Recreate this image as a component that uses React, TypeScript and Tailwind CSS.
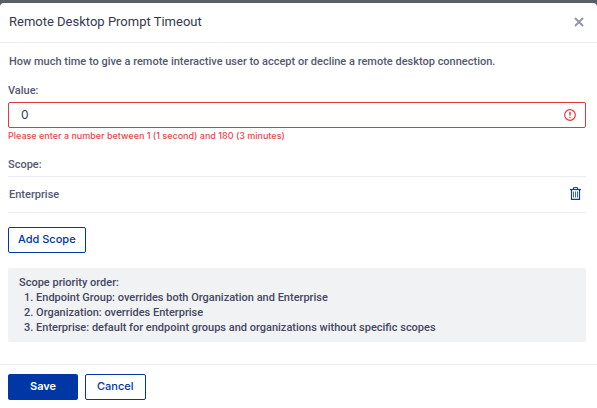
import { useState } from 'react';

const priorities = [
  'Endpoint Group: overrides both Organization and Enterprise',
  'Organization: overrides Enterprise',
  'Enterprise: default for endpoint groups and organizations without specific scopes',
];

function CloseIcon() {
  return (
    <svg viewBox="0 0 10 10" className="w-[10px] h-[10px]" fill="none" stroke="currentColor" strokeWidth="2">
      <path d="M1 1l8 8M9 1L1 9" />
    </svg>
  );
}

function ErrorIcon() {
  return (
    <svg viewBox="0 0 12 12" className="w-3 h-3" fill="none" stroke="currentColor">
      <circle cx="6" cy="6" r="5.3" strokeWidth="1.2" />
      <path d="M6 2.8v3.8M6 7.8v1.3" strokeWidth="1.4" />
    </svg>
  );
}

function TrashIcon() {
  return (
    <svg viewBox="0 0 11 13" className="w-[11px] h-[13px]" fill="none" stroke="currentColor">
      <path d="M0 2.5h11" strokeWidth="1.2" />
      <path d="M3.5 2.2V.6h4v1.6" strokeWidth="1" />
      <path d="M1.5 3v9.4h8V3" strokeWidth="1.2" />
      <path d="M3.5 4.5v6M5.5 4.5v6M7.5 4.5v6" strokeWidth="0.8" />
    </svg>
  );
}

export default function App() {
  const [value, setValue] = useState('0');

  return (
    <div className="min-h-screen bg-[#5a5e66] pt-[3px] font-['Roboto',sans-serif] text-[11px] leading-4 font-medium text-[#555872]">
      <div role="dialog" aria-labelledby="title" className="min-h-[405px] bg-white rounded-t-sm">
        {/* Header */}
        <header className="flex items-center justify-between h-10 px-[9px] pb-0.5 border-b border-[#ebecf5]">
          <h1 id="title" className="text-[13px] font-normal text-[#363850]">Remote Desktop Prompt Timeout</h1>
          <button type="button" aria-label="Close" className="px-1 text-[#9296a8]">
            <CloseIcon />
          </button>
        </header>

        {/* Body */}
        <div className="pl-2 pr-[11px] pt-[11px] pb-[22px]">
          <p className="pl-px">How much time to give a remote interactive user to accept or decline a remote desktop connection.</p>

          <label htmlFor="value" className="block mt-[13px]">Value:</label>
          <div className="flex items-center h-[26px] mt-[3px] pl-3 pr-[9px] border border-[#e0393e] rounded-xs text-[#e0393e]">
            <input
              id="value"
              type="text"
              value={value}
              onChange={(e) => setValue(e.target.value)}
              aria-invalid="true"
              aria-describedby="value-error"
              className="flex-1 min-w-0 font-['Inter',sans-serif] text-xs font-normal text-[#363850] outline-none"
            />
            <ErrorIcon />
          </div>
          <p id="value-error" className="font-['Inter',sans-serif] text-[9px] text-[#e8474b]">
            Please enter a number between 1 (1 second) and 180 (3 minutes)
          </p>

          <h2 className="mt-[13px]">Scope:</h2>
          <div className="flex items-center justify-between h-[37px] mt-[3px] pl-px pr-[5px] border-y border-[#ebecf5]">
            <span>Enterprise</span>
            <button type="button" aria-label="Delete scope" className="pb-0.5 text-[#0a3ea3]">
              <TrashIcon />
            </button>
          </div>

          <button type="button" className="block h-[26px] mt-[14px] px-[9px] pb-0.5 border border-[#0037a4] rounded-xs font-['Inter',sans-serif] text-[#0037a4]">
            Add Scope
          </button>

          <div className="mt-[15px] px-[11px] py-[7px] bg-[#f1f2f4] rounded-xs leading-[15px] text-[#45485e]">
            <p>Scope priority order:</p>
            <ol className="pl-[5px] list-decimal list-inside">
              {priorities.map((text) => (
                <li key={text}>{text}</li>
              ))}
            </ol>
          </div>
        </div>

        {/* Footer */}
        <footer className="flex gap-[7px] px-2 pt-[9px] border-t border-[#ebecf5]">
          <button type="button" className="h-[26px] px-[22px] pb-0.5 bg-[#0037a4] rounded-xs font-['Inter',sans-serif] font-semibold text-white">
            Save
          </button>
          <button type="button" className="h-[26px] px-[11px] pb-0.5 border border-[#0037a4] rounded-xs font-['Inter',sans-serif] text-[#0037a4]">
            Cancel
          </button>
        </footer>
      </div>
    </div>
  );
}
